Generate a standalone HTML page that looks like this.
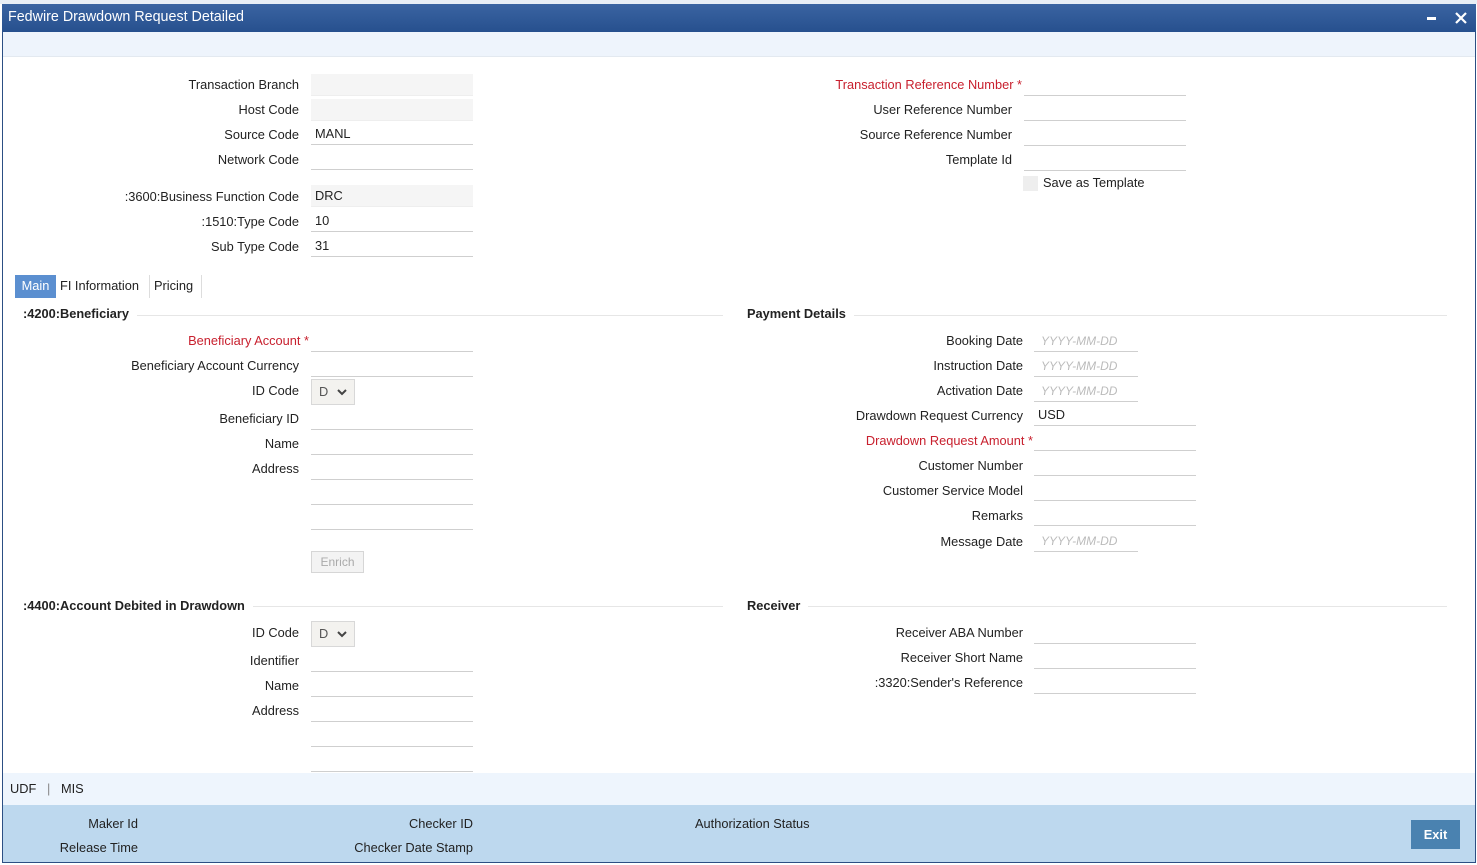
<!DOCTYPE html>
<html><head><meta charset="utf-8"><style>
*{box-sizing:border-box;margin:0;padding:0}
body{width:1477px;height:865px;background:#fff;font-family:"Liberation Sans",Arial,sans-serif;font-size:12.8px;color:#222;position:relative;overflow:hidden}
.a{position:absolute}
.lbl{position:absolute;text-align:right;line-height:18px;white-space:nowrap}
.req{color:#c8202e}
.inp{position:absolute;height:22px;border-bottom:1px solid #cfcfcf;line-height:22px;padding-left:4px}
.ro{background:#f5f5f5;border-bottom:1px solid #eee}
.ph{color:#bbb;font-style:italic;font-size:12px;padding-left:7px}
.sec{position:absolute;font-weight:bold;line-height:18px;background:#fff;padding-right:8px}
.hr{position:absolute;height:1px;background:#e6e6e6}
.sel{position:absolute;width:44px;height:26px;background:#f3f2ef;border:1px solid #d8d8d8;color:#555;line-height:24px;padding-left:7px}
.sel svg{position:absolute;left:25px;top:9px}
</style></head><body>
<div class="a" style="left:0;top:0;width:1477px;height:4px;background:#e8eef6"></div>
<div class="a" style="left:2px;top:4px;width:1474px;height:859px;border:1px solid #2c4f84;border-top:none"></div>
<div class="a" style="left:2px;top:4px;width:1474px;height:28px;background:linear-gradient(#3a64a2,#27508e);color:#fff;font-size:14.3px;line-height:27px;padding-left:6px">Fedwire Drawdown Request Detailed</div>
<div class="a" style="left:1427px;top:17px;width:9px;height:3px;background:#fff"></div>
<svg class="a" style="left:1455px;top:12px" width="12" height="12"><path d="M1 1L11 11M11 1L1 11" stroke="#fff" stroke-width="2.2"/></svg>
<div class="a" style="left:3px;top:32px;width:1472px;height:25px;background:#eef4fc;border-bottom:1px solid #e3e9f0"></div>

<div class="lbl" style="left:0;width:299px;top:76px">Transaction Branch</div><div class="inp ro" style="left:311px;top:74px;width:162px"></div>
<div class="lbl" style="left:0;width:299px;top:101px">Host Code</div><div class="inp ro" style="left:311px;top:99px;width:162px"></div>
<div class="lbl" style="left:0;width:299px;top:126px">Source Code</div><div class="inp" style="left:311px;top:123px;width:162px">MANL</div>
<div class="lbl" style="left:0;width:299px;top:151px">Network Code</div><div class="inp" style="left:311px;top:148px;width:162px"></div>
<div class="lbl" style="left:0;width:299px;top:188px">:3600:Business Function Code</div><div class="inp ro" style="left:311px;top:185px;width:162px">DRC</div>
<div class="lbl" style="left:0;width:299px;top:213px">:1510:Type Code</div><div class="inp" style="left:311px;top:210px;width:162px">10</div>
<div class="lbl" style="left:0;width:299px;top:238px">Sub Type Code</div><div class="inp" style="left:311px;top:235px;width:162px">31</div>

<div class="lbl req" style="left:600px;width:422px;top:76px">Transaction Reference Number *</div><div class="inp" style="left:1024px;top:74px;width:162px"></div>
<div class="lbl" style="left:600px;width:412px;top:101px">User Reference Number</div><div class="inp" style="left:1024px;top:99px;width:162px"></div>
<div class="lbl" style="left:600px;width:412px;top:126px">Source Reference Number</div><div class="inp" style="left:1024px;top:124px;width:162px"></div>
<div class="lbl" style="left:600px;width:412px;top:151px">Template Id</div><div class="inp" style="left:1024px;top:149px;width:162px"></div>
<div class="a" style="left:1023px;top:176px;width:15px;height:15px;background:#eee"></div>
<div class="lbl" style="left:1043px;top:174px;text-align:left">Save as Template</div>

<div class="a" style="left:15px;top:275px;width:41px;height:23px;background:#5b8fd0;color:#fff;line-height:22px;text-align:center">Main</div>
<div class="a" style="left:60px;top:275px;line-height:22px">FI Information</div>
<div class="a" style="left:149px;top:275px;width:1px;height:23px;background:#ddd"></div>
<div class="a" style="left:154px;top:275px;line-height:22px">Pricing</div>
<div class="a" style="left:201px;top:275px;width:1px;height:23px;background:#ddd"></div>

<div class="hr" style="left:23px;top:315px;width:700px"></div>
<div class="sec" style="left:23px;top:305px">:4200:Beneficiary</div>
<div class="lbl req" style="left:0;width:309px;top:332px">Beneficiary Account *</div><div class="inp" style="left:311px;top:330px;width:162px"></div>
<div class="lbl" style="left:0;width:299px;top:357px">Beneficiary Account Currency</div><div class="inp" style="left:311px;top:355px;width:162px"></div>
<div class="lbl" style="left:0;width:299px;top:382px">ID Code</div><div class="sel" style="left:311px;top:379px">D<svg width="10" height="7"><path d="M1 1L5 5L9 1" stroke="#444" stroke-width="2" fill="none"/></svg></div>
<div class="lbl" style="left:0;width:299px;top:410px">Beneficiary ID</div><div class="inp" style="left:311px;top:408px;width:162px"></div>
<div class="lbl" style="left:0;width:299px;top:435px">Name</div><div class="inp" style="left:311px;top:433px;width:162px"></div>
<div class="lbl" style="left:0;width:299px;top:460px">Address</div><div class="inp" style="left:311px;top:458px;width:162px"></div>
<div class="inp" style="left:311px;top:483px;width:162px"></div>
<div class="inp" style="left:311px;top:508px;width:162px"></div>
<div class="a" style="left:311px;top:551px;width:53px;height:22px;background:#f3f3f3;border:1px solid #d6d6d6;color:#aaa;font-size:12px;line-height:20px;text-align:center">Enrich</div>

<div class="hr" style="left:747px;top:315px;width:700px"></div>
<div class="sec" style="left:747px;top:305px">Payment Details</div>
<div class="lbl" style="left:700px;width:323px;top:332px">Booking Date</div><div class="inp ph" style="left:1034px;top:330px;width:104px">YYYY-MM-DD</div>
<div class="lbl" style="left:700px;width:323px;top:357px">Instruction Date</div><div class="inp ph" style="left:1034px;top:355px;width:104px">YYYY-MM-DD</div>
<div class="lbl" style="left:700px;width:323px;top:382px">Activation Date</div><div class="inp ph" style="left:1034px;top:380px;width:104px">YYYY-MM-DD</div>
<div class="lbl" style="left:700px;width:323px;top:407px">Drawdown Request Currency</div><div class="inp" style="left:1034px;top:404px;width:162px">USD</div>
<div class="lbl req" style="left:700px;width:333px;top:432px">Drawdown Request Amount *</div><div class="inp" style="left:1034px;top:429px;width:162px"></div>
<div class="lbl" style="left:700px;width:323px;top:457px">Customer Number</div><div class="inp" style="left:1034px;top:454px;width:162px"></div>
<div class="lbl" style="left:700px;width:323px;top:482px">Customer Service Model</div><div class="inp" style="left:1034px;top:479px;width:162px"></div>
<div class="lbl" style="left:700px;width:323px;top:507px">Remarks</div><div class="inp" style="left:1034px;top:504px;width:162px"></div>
<div class="lbl" style="left:700px;width:323px;top:533px">Message Date</div><div class="inp ph" style="left:1034px;top:530px;width:104px">YYYY-MM-DD</div>

<div class="hr" style="left:23px;top:606px;width:700px"></div>
<div class="sec" style="left:23px;top:597px">:4400:Account Debited in Drawdown</div>
<div class="lbl" style="left:0;width:299px;top:624px">ID Code</div><div class="sel" style="left:311px;top:621px">D<svg width="10" height="7"><path d="M1 1L5 5L9 1" stroke="#444" stroke-width="2" fill="none"/></svg></div>
<div class="lbl" style="left:0;width:299px;top:652px">Identifier</div><div class="inp" style="left:311px;top:650px;width:162px"></div>
<div class="lbl" style="left:0;width:299px;top:677px">Name</div><div class="inp" style="left:311px;top:675px;width:162px"></div>
<div class="lbl" style="left:0;width:299px;top:702px">Address</div><div class="inp" style="left:311px;top:700px;width:162px"></div>
<div class="inp" style="left:311px;top:725px;width:162px"></div>
<div class="inp" style="left:311px;top:750px;width:162px"></div>

<div class="hr" style="left:747px;top:606px;width:700px"></div>
<div class="sec" style="left:747px;top:597px">Receiver</div>
<div class="lbl" style="left:700px;width:323px;top:624px">Receiver ABA Number</div><div class="inp" style="left:1034px;top:622px;width:162px"></div>
<div class="lbl" style="left:700px;width:323px;top:649px">Receiver Short Name</div><div class="inp" style="left:1034px;top:647px;width:162px"></div>
<div class="lbl" style="left:700px;width:323px;top:674px">:3320:Sender's Reference</div><div class="inp" style="left:1034px;top:672px;width:162px"></div>

<div class="a" style="left:3px;top:773px;width:1472px;height:32px;background:#eef5fd"></div>
<div class="a" style="left:10px;top:780px;line-height:18px">UDF &nbsp;&nbsp;<span style="color:#888">|</span>&nbsp;&nbsp; MIS</div>
<div class="a" style="left:3px;top:805px;width:1472px;height:57px;background:#bdd8ee"></div>
<div class="lbl" style="left:0;width:138px;top:815px">Maker Id</div>
<div class="lbl" style="left:0;width:138px;top:839px">Release Time</div>
<div class="lbl" style="left:200px;width:273px;top:815px">Checker ID</div>
<div class="lbl" style="left:200px;width:273px;top:839px">Checker Date Stamp</div>
<div class="lbl" style="left:695px;top:815px;text-align:left">Authorization Status</div>
<div class="a" style="left:1411px;top:820px;width:49px;height:29px;background:#4a82b0;color:#fff;font-weight:bold;line-height:29px;text-align:center">Exit</div>
</body></html>
